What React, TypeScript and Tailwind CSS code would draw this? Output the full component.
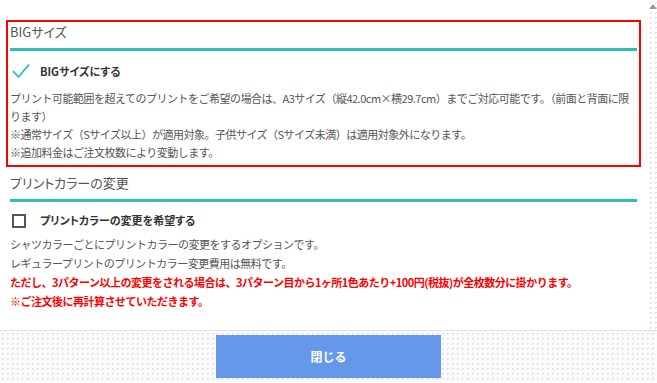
import React from "react";

const font = "font-['Noto_Sans_CJK_JP','Noto_Sans',sans-serif]";

const CheckMark = () => (
  <svg width="18" height="16" viewBox="0 0 18 16" className="shrink-0">
    <polyline points="1,8 6.5,14 17,1.5" fill="none" stroke="#2ebdb6" strokeWidth="1.8" />
  </svg>
);

const OptionSection = ({
  title,
  label,
  checked,
  rowHeight,
  children,
}: {
  title: string;
  label: string;
  checked: boolean;
  rowHeight: string;
  children: React.ReactNode;
}) => (
  <div className="flex flex-col">
    <div className="h-[29px] pb-[6px] flex items-center text-[13px] text-[#555] [font-feature-settings:'palt'] border-b-[3px] border-[#2ebfb9]">
      {title}
    </div>
    <div className={`${rowHeight} flex items-center gap-[10px] pl-[2px]`}>
      {checked ? (
        <CheckMark />
      ) : (
        <span className="w-[14px] h-[14px] border-2 border-[#555] mr-[4px]" />
      )}
      <span className="text-[11px] font-bold text-[#333] [font-feature-settings:'palt']">{label}</span>
    </div>
    {children}
  </div>
);

export default function App() {
  return (
    <div className={`w-[657px] h-[383px] flex flex-col bg-white overflow-hidden ${font}`}>
      <div className="flex flex-1 min-h-0">
        <div className="flex-1 pl-[10px] pr-[11px] pt-[20px]">
          <div className="-mx-[4px] border-2 border-[#f00] px-[2px] pb-[4px]">
            <OptionSection title="BIGサイズ" label="BIGサイズにする" rowHeight="h-[40px]" checked>
              <div className="text-[11px] leading-[18px] tracking-[-0.5px] text-[#555] -mt-[2px]">
                <p>プリント可能範囲を超えてのプリントをご希望の場合は、A3サイズ（縦42.0cm×横29.7cm）までご対応可能です。（前面と背面に限ります）</p>
                <p>※通常サイズ（Sサイズ以上）が適用対象。子供サイズ（Sサイズ未満）は適用対象外になります。</p>
                <p>※追加料金はご注文枚数により変動します。</p>
              </div>
            </OptionSection>
          </div>
          <div className="mt-[6px]">
            <OptionSection
              title="プリントカラーの変更"
              label="プリントカラーの変更を希望する"
              rowHeight="h-[37px]"
              checked={false}
            >
              <div className="text-[11px] leading-[19px] tracking-[-0.5px] text-[#555] -mt-[4px]">
                <p>シャツカラーごとにプリントカラーの変更をするオプションです。</p>
                <p>レギュラープリントのプリントカラー変更費用は無料です。</p>
                <p className="font-bold text-[#f00]">
                  ただし、3パターン以上の変更をされる場合は、3パターン目から1ヶ所1色あたり+100円(税抜)が全枚数分に掛かります。
                </p>
                <p className="font-bold text-[#f00]">※ご注文後に再計算させていただきます。</p>
              </div>
            </OptionSection>
          </div>
        </div>
        <div className="w-[9px] flex flex-col items-center bg-[radial-gradient(#e4dde1_1px,transparent_1px)] bg-[length:5px_5px]">
          <span className="mt-[4px] w-0 h-0 border-l-[4px] border-r-[4px] border-b-[5px] border-l-transparent border-r-transparent border-b-[#999]" />
        </div>
      </div>
      <div className="h-[53px] shrink-0 border-t border-[#e4e0e2] bg-[#fcfbfb] bg-[radial-gradient(#e4dde1_1px,transparent_1px)] bg-[length:5px_5px] flex justify-center pt-[4px]">
        <button className="w-[225px] h-[43px] bg-[#6597ea] text-white text-[12px] font-bold">閉じる</button>
      </div>
    </div>
  );
}
